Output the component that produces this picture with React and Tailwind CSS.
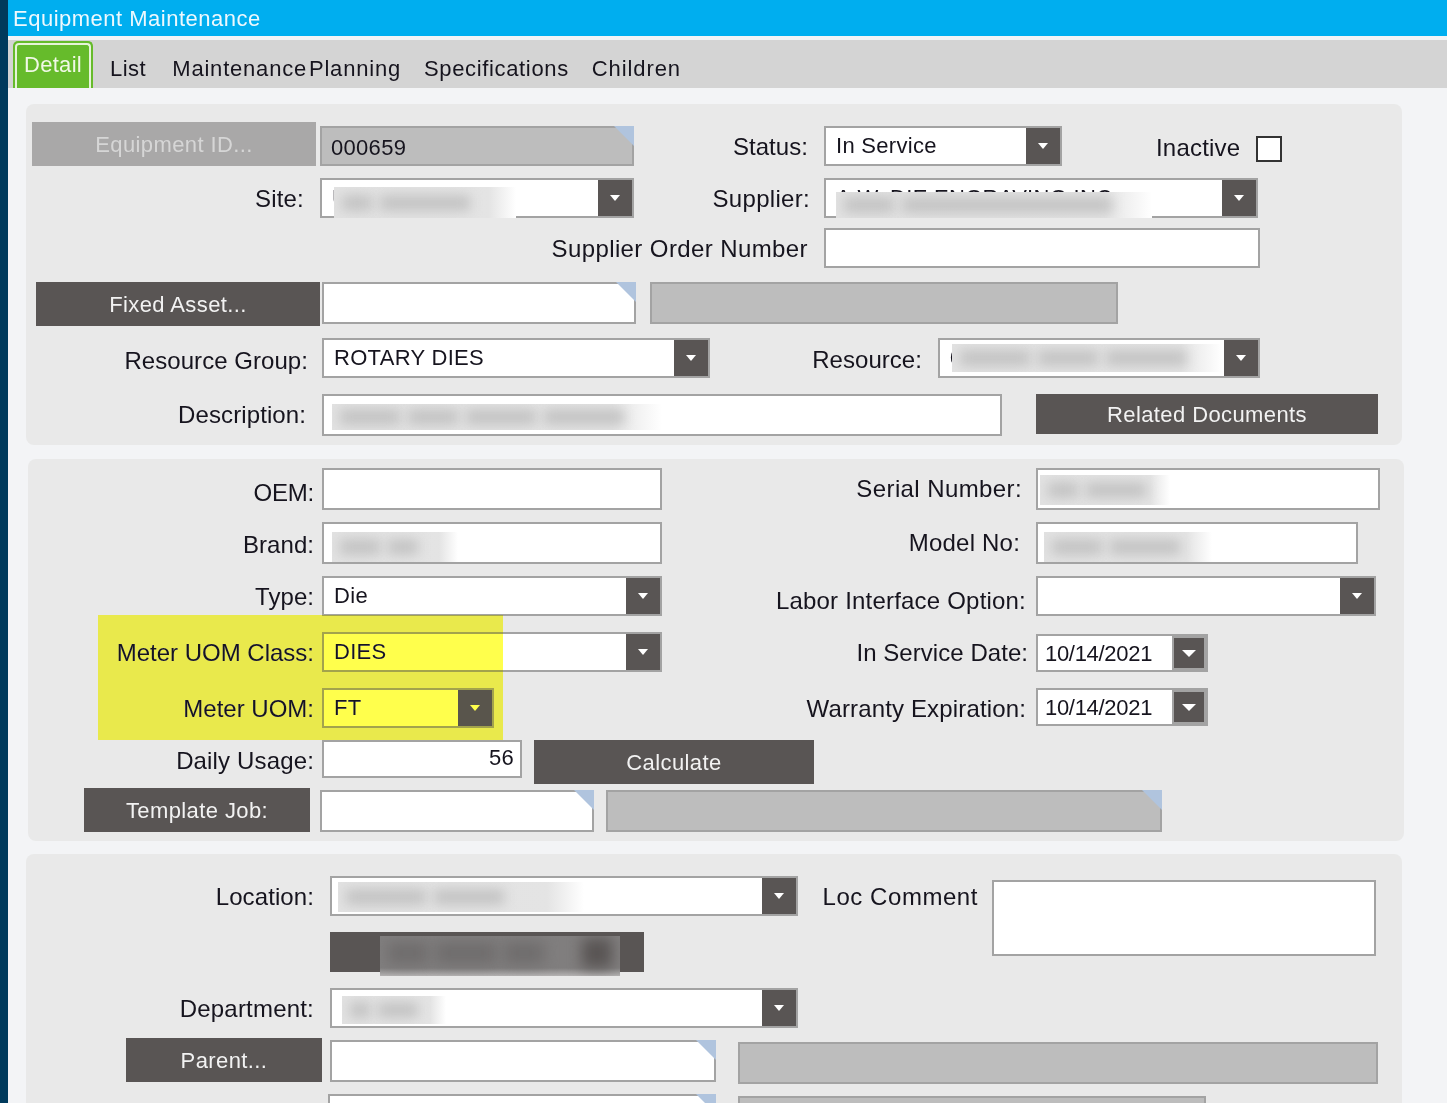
import React from "react";

const Arrow = ({ big }) => (
  big
    ? <svg width="14" height="7" viewBox="0 0 14 7" className="block"><polygon points="0,0 14,0 7,7" fill="#ffffff" /></svg>
    : <svg width="10" height="6" viewBox="0 0 10 6" className="block"><polygon points="0,0 10,0 5,6" fill="#ffffff" /></svg>
);

const Corner = () => (
  <svg width="20" height="20" viewBox="0 0 20 20" className="absolute -top-[2px] -right-[2px]"><polygon points="0,0 20,0 20,20" fill="#b0c4de" /></svg>
);

const Blur = ({ className, bars }) => (
  <div className={`absolute overflow-hidden flex items-center gap-[8px] px-[8px] bg-gradient-to-r from-[#e2e2e2] via-[#e4e4e4] via-85% to-white ${className}`}>
    {bars.map((w, i) => (
      <span key={i} style={{ width: w }} className="h-[16px] shrink-0 blur-[6px] bg-[#c4c4c4]" />
    ))}
  </div>
);

const DarkBlur = ({ className, bars }) => (
  <div className={`absolute overflow-hidden flex items-center gap-[8px] px-[8px] pb-[6px] bg-gradient-to-b from-[#807e7e] via-[#807e7e] via-80% to-[#b5b3b3] ${className}`}>
    {bars.map((w, i) => (
      <span key={i} style={{ width: w }} className="h-[22px] shrink-0 blur-[7px] bg-[#6f6d6d]" />
    ))}
    <span className="ml-auto w-[30px] h-[30px] shrink-0 blur-[7px] bg-[#595554]" />
  </div>
);

const Label = ({ className = "", track = "tracking-[0.05px]", children }) => (
  <div className={`shrink-0 text-right whitespace-nowrap text-[24px] leading-[28px] text-[#16141e] ${track} ${className}`}>{children}</div>
);

const Button = ({ className = "", children }) => (
  <div className={`shrink-0 flex items-center justify-center text-[22px] tracking-[0.4px] ${className}`}>{children}</div>
);

const Input = ({ className = "", corner, children }) => (
  <div className={`relative shrink-0 flex items-center px-[9px] border-2 border-[#a3a3a3] bg-white text-[22px] tracking-[0.3px] text-[#16141e] ${className}`}>
    {children}
    {corner && <Corner />}
  </div>
);

const Gray = ({ className = "", corner, children }) => (
  <div className={`relative shrink-0 flex items-center px-[9px] border-2 border-[#a3a3a3] bg-[#bdbdbd] text-[22px] tracking-[0.3px] text-[#16141e] ${className}`}>
    {children}
    {corner && <Corner />}
  </div>
);

const Select = ({ className = "", text, children }) => (
  <div className={`relative shrink-0 flex items-stretch border-2 border-[#a3a3a3] bg-white text-[22px] tracking-[0.3px] text-[#16141e] ${className}`}>
    <div className="flex-1 min-w-0 overflow-hidden whitespace-nowrap flex items-center pl-[10px] pb-[1px]">{text}</div>
    <div className="w-[34px] shrink-0 flex items-center justify-center bg-[#595554]"><Arrow /></div>
    {children}
  </div>
);

const DateField = ({ className = "", text }) => (
  <div className={`shrink-0 flex items-stretch w-[172px] h-[38px] bg-[#a3a3a3] ${className}`}>
    <div className="my-[2px] ml-[2px] w-[134px] shrink-0 flex items-center pl-[7px] pt-[1px] bg-white text-[22px] tracking-[-0.3px] text-[#16141e]">{text}</div>
    <div className="my-[4px] ml-[2px] w-[30px] shrink-0 flex items-center justify-center bg-[#595554]"><Arrow big /></div>
  </div>
);

const Panel = ({ className = "", children }) => (
  <div className={`flex flex-col rounded-[8px] bg-[#e9e9e9] ${className}`}>{children}</div>
);

const Tab = ({ children, className = "" }) => (
  <div className={`whitespace-nowrap text-[22px] text-[#16141e] ${className}`}>{children}</div>
);

const dark = "bg-[#595554] text-[#f2f2f2]";

export default function App() {
  return (
    <div className="relative flex w-[1447px] h-[1103px] overflow-hidden bg-[#003a5c] font-['Liberation_Sans',Arial,sans-serif]">
      <div className="w-[8px] shrink-0" />
      <div className="flex-1 min-w-0 flex flex-col bg-[#f3f4f6]">
        <div className="h-[36px] shrink-0 flex items-center bg-[#00aeef] pl-[5px] text-[22px] tracking-[0.5px] text-[#eef8fd]">Equipment Maintenance</div>
        <div className="mt-[4px] h-[48px] shrink-0 flex items-end bg-[#d4d4d4]">
          <div className="ml-[5px] w-[80px] h-[47px] rounded-t-[5px] border-2 border-b-0 border-[#66bb2b] bg-[#66bb2b]">
            <div className="h-full flex justify-center pt-[3px] rounded-t-[4px] border-2 border-b-0 border-[#e6f4d8] text-[22px] tracking-[0.3px] text-[#f0f8e6]">Detail</div>
          </div>
          <div className="flex h-full items-center pt-[8px]">
            <Tab className="ml-[17px] tracking-[0.5px]">List</Tab>
            <Tab className="ml-[26px] tracking-[0.8px] [word-spacing:-5px]">Maintenance Planning</Tab>
            <Tab className="ml-[23px] tracking-[0.65px]">Specifications</Tab>
            <Tab className="ml-[23px] tracking-[0.9px]">Children</Tab>
          </div>
        </div>

        <Panel className="ml-[18px] mt-[16px] w-[1376px] h-[341px] shrink-0 pt-[18px]">
          <div className="flex items-end h-[44px]">
            <Button className="ml-[6px] w-[284px] h-[44px] bg-[#a9a8a8] text-[#d6d6d6]">Equipment ID...</Button>
            <Gray corner className="ml-[4px] w-[314px] h-[40px] pt-[2px]">000659</Gray>
            <Label className="w-[174px] self-end mb-[5px]">Status:</Label>
            <Select className="ml-[16px] w-[238px] h-[40px]" text="In Service" />
            <Label className="ml-[94px] w-[84px] mb-[4px]" track="tracking-[0.2px]">Inactive</Label>
            <div className="ml-[16px] mb-[4px] w-[26px] h-[26px] shrink-0 border-2 border-[#333333] bg-white" />
          </div>
          <div className="flex items-center h-[40px] mt-[12px]">
            <Label className="w-[278px] mt-[2px]" track="tracking-[0.2px]">Site:</Label>
            <Select className="ml-[16px] w-[314px] h-[40px]" text="U">
              <Blur className="left-[12px] top-[7px] w-[182px] h-[31px]" bars={[30, 90]} />
            </Select>
            <Label className="w-[176px] mt-[2px]" track="tracking-[0.3px]">Supplier:</Label>
            <Select className="ml-[14px] w-[434px] h-[40px]" text="A.W. DIE ENGRAVING INC">
              <Blur className="left-[10px] top-[12px] w-[316px] h-[26px]" bars={[50, 210]} />
            </Select>
          </div>
          <div className="flex items-center h-[40px] mt-[10px]">
            <Label className="w-[782px] mt-[2px]" track="tracking-[0.4px]">Supplier Order Number</Label>
            <Input className="ml-[16px] w-[436px] h-[40px]" />
          </div>
          <div className="flex items-start h-[44px] mt-[14px]">
            <Button className={`ml-[10px] w-[284px] h-[44px] ${dark}`}>Fixed Asset...</Button>
            <Input corner className="ml-[2px] w-[314px] h-[42px]" />
            <Gray className="ml-[14px] w-[468px] h-[42px]" />
          </div>
          <div className="flex items-center h-[40px] mt-[12px]">
            <Label className="w-[282px] mt-[6px]">Resource Group:</Label>
            <Select className="ml-[14px] w-[388px] h-[40px]" text="ROTARY DIES" />
            <Label className="w-[212px] mt-[4px]">Resource:</Label>
            <Select className="ml-[16px] w-[322px] h-[40px]" text="0">
              <Blur className="left-[12px] top-[4px] w-[270px] h-[28px]" bars={[70, 60, 80]} />
            </Select>
          </div>
          <div className="flex items-start h-[42px] mt-[16px]">
            <Label className="w-[280px] mt-[7px]" track="tracking-[0.1px]">Description:</Label>
            <Input className="ml-[16px] w-[680px] h-[42px]">
              <Blur className="left-[8px] top-[8px] w-[330px] h-[26px]" bars={[60, 50, 70, 80]} />
            </Input>
            <Button className={`ml-[34px] w-[342px] h-[40px] ${dark}`}>Related Documents</Button>
          </div>
        </Panel>

        <Panel className="ml-[20px] mt-[14px] w-[1376px] h-[382px] shrink-0 pt-[9px]">
          <div className="flex items-center h-[42px]">
            <Label className="w-[286px] mt-[8px]" track="tracking-[-0.2px]">OEM:</Label>
            <Input className="ml-[8px] w-[340px] h-[42px]" />
            <Label className="w-[360px]" track="tracking-[0.4px]">Serial Number:</Label>
            <Input className="ml-[14px] w-[344px] h-[42px]">
              <Blur className="left-[2px] top-[5px] w-[130px] h-[30px]" bars={[30, 60]} />
            </Input>
          </div>
          <div className="flex items-center h-[42px] mt-[12px]">
            <Label className="w-[286px] mt-[4px]">Brand:</Label>
            <Input className="ml-[8px] w-[340px] h-[42px]">
              <Blur className="left-[8px] top-[8px] w-[126px] h-[30px]" bars={[40, 30]} />
            </Input>
            <Label className="w-[358px]" track="tracking-[0.2px]">Model No:</Label>
            <Input className="ml-[16px] w-[322px] h-[42px]">
              <Blur className="left-[6px] top-[8px] w-[168px] h-[30px]" bars={[50, 70]} />
            </Input>
          </div>
          <div className="flex items-center h-[40px] mt-[12px]">
            <Label className="w-[286px] mt-[2px]">Type:</Label>
            <Select className="ml-[8px] w-[340px] h-[40px]" text="Die" />
            <Label className="w-[364px] mt-[10px]" track="tracking-[0.2px]">Labor Interface Option:</Label>
            <Select className="ml-[10px] w-[340px] h-[40px]" text="" />
          </div>
          <div className="flex items-center h-[40px] mt-[16px]">
            <Label className="w-[286px] mt-[2px]" track="tracking-[0px]">Meter UOM Class:</Label>
            <Select className="ml-[8px] w-[340px] h-[40px]" text="DIES" />
            <Label className="w-[366px] mt-[2px]">In Service Date:</Label>
            <DateField className="ml-[8px] mt-[2px]" text="10/14/2021" />
          </div>
          <div className="flex items-center h-[40px] mt-[16px]">
            <Label className="w-[286px] mt-[2px]" track="tracking-[0px]">Meter UOM:</Label>
            <Select className="ml-[8px] w-[172px] h-[40px]" text="FT" />
            <Label className="w-[532px] mt-[2px]" track="tracking-[0.15px]">Warranty Expiration:</Label>
            <DateField className="ml-[10px] -mt-[2px]" text="10/14/2021" />
          </div>
          <div className="flex items-start h-[44px] mt-[12px]">
            <Label className="w-[286px] mt-[7px]" track="tracking-[0.15px]">Daily Usage:</Label>
            <Input className="ml-[8px] w-[200px] h-[38px] justify-end pb-[3px] !pr-[6px]">56</Input>
            <Button className={`ml-[12px] w-[280px] h-[44px] ${dark}`}>Calculate</Button>
          </div>
          <div className="flex items-end h-[44px] mt-[4px]">
            <Button className={`ml-[56px] w-[226px] h-[44px] ${dark}`}>Template Job:</Button>
            <Input corner className="ml-[10px] w-[274px] h-[42px]" />
            <Gray corner className="ml-[12px] w-[556px] h-[42px]" />
          </div>
        </Panel>

        <Panel className="ml-[18px] mt-[13px] w-[1376px] flex-1 pt-[22px]">
          <div className="flex items-start">
            <div className="flex flex-col">
              <div className="flex items-center h-[40px]">
                <Label className="w-[288px] mt-[2px]" track="tracking-[0.1px]">Location:</Label>
                <Select className="ml-[16px] w-[468px] h-[40px]" text="">
                  <Blur className="left-[6px] top-[4px] w-[246px] h-[30px]" bars={[80, 70]} />
                </Select>
              </div>
              <div className="relative ml-[304px] mt-[16px] w-[314px] h-[40px] bg-[#595554]">
                <DarkBlur className="left-[50px] top-[4px] w-[240px] h-[40px]" bars={[40, 60, 40]} />
              </div>
            </div>
            <Label className="ml-[24px] mt-[7px] w-[156px]" track="tracking-[0.55px]">Loc Comment</Label>
            <Input className="ml-[14px] mt-[4px] w-[384px] h-[76px]" />
          </div>
          <div className="flex items-center h-[40px] mt-[16px]">
            <Label className="w-[288px] mt-[2px]" track="tracking-[0.2px]">Department:</Label>
            <Select className="ml-[16px] w-[468px] h-[40px]" text="">
              <Blur className="left-[10px] top-[6px] w-[104px] h-[28px]" bars={[20, 40]} />
            </Select>
          </div>
          <div className="flex items-start h-[46px] mt-[10px]">
            <Button className={`ml-[100px] w-[196px] h-[44px] ${dark}`}>Parent...</Button>
            <Input corner className="ml-[8px] mt-[2px] w-[386px] h-[42px]" />
            <Gray className="ml-[22px] mt-[4px] w-[640px] h-[42px]" />
          </div>
          <div className="flex items-start mt-[10px]">
            <Input corner className="ml-[302px] w-[388px] h-[42px]" />
            <Gray className="ml-[22px] mt-[2px] w-[468px] h-[42px]" />
          </div>
        </Panel>
      </div>
      <div className="absolute left-[98px] top-[615px] w-[405px] h-[125px] bg-[#ffff4c] mix-blend-darken" />
    </div>
  );
}
